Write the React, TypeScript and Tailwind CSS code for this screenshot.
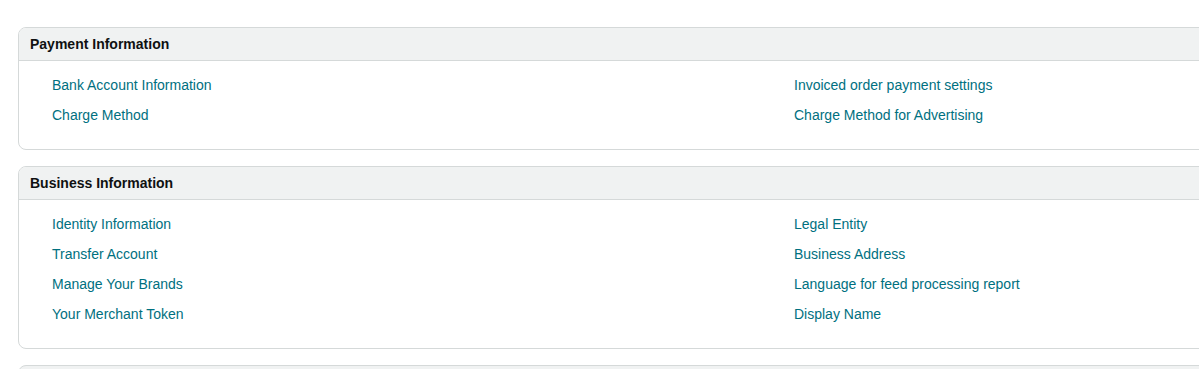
const sections = [
  {
    title: "Payment Information",
    left: ["Bank Account Information", "Charge Method"],
    right: ["Invoiced order payment settings", "Charge Method for Advertising"],
  },
  {
    title: "Business Information",
    left: ["Identity Information", "Transfer Account", "Manage Your Brands", "Your Merchant Token"],
    right: ["Legal Entity", "Business Address", "Language for feed processing report", "Display Name"],
  },
]

function Section({ title, left, right }: { title: string; left: string[]; right: string[] }) {
  return (
    <div className="w-[1220px] shrink-0 rounded-lg border border-[#d5d9d9] bg-white overflow-hidden">
      <div className="h-[33px] flex items-center px-[11px] bg-[#f0f2f2] border-b border-[#d5d9d9] text-[14px] font-bold text-[#0f1111]">
        {title}
      </div>
      <div className="grid grid-cols-[742px_1fr] pl-[33px] pt-[9px] pb-[19px]">
        <div className="flex flex-col">
          {left.map((l) => (
            <a key={l} href="#" className="h-[30px] flex items-center text-[14px] text-[#00707f]">
              {l}
            </a>
          ))}
        </div>
        <div className="flex flex-col">
          {right.map((l) => (
            <a key={l} href="#" className="h-[30px] flex items-center text-[14px] text-[#00707f]">
              {l}
            </a>
          ))}
        </div>
      </div>
    </div>
  )
}

export default function App() {
  return (
    <div
      className="w-[1199px] h-[369px] overflow-hidden bg-white pl-[18px] pt-[27px] flex flex-col gap-[16px]"
      style={{ fontFamily: '"Liberation Sans", Arial, sans-serif' }}
    >
      {sections.map((s) => (
        <Section key={s.title} {...s} />
      ))}
      <div className="w-[1220px] h-[40px] shrink-0 rounded-t-lg border border-[#d5d9d9] bg-[#f0f2f2]" />
    </div>
  )
}
